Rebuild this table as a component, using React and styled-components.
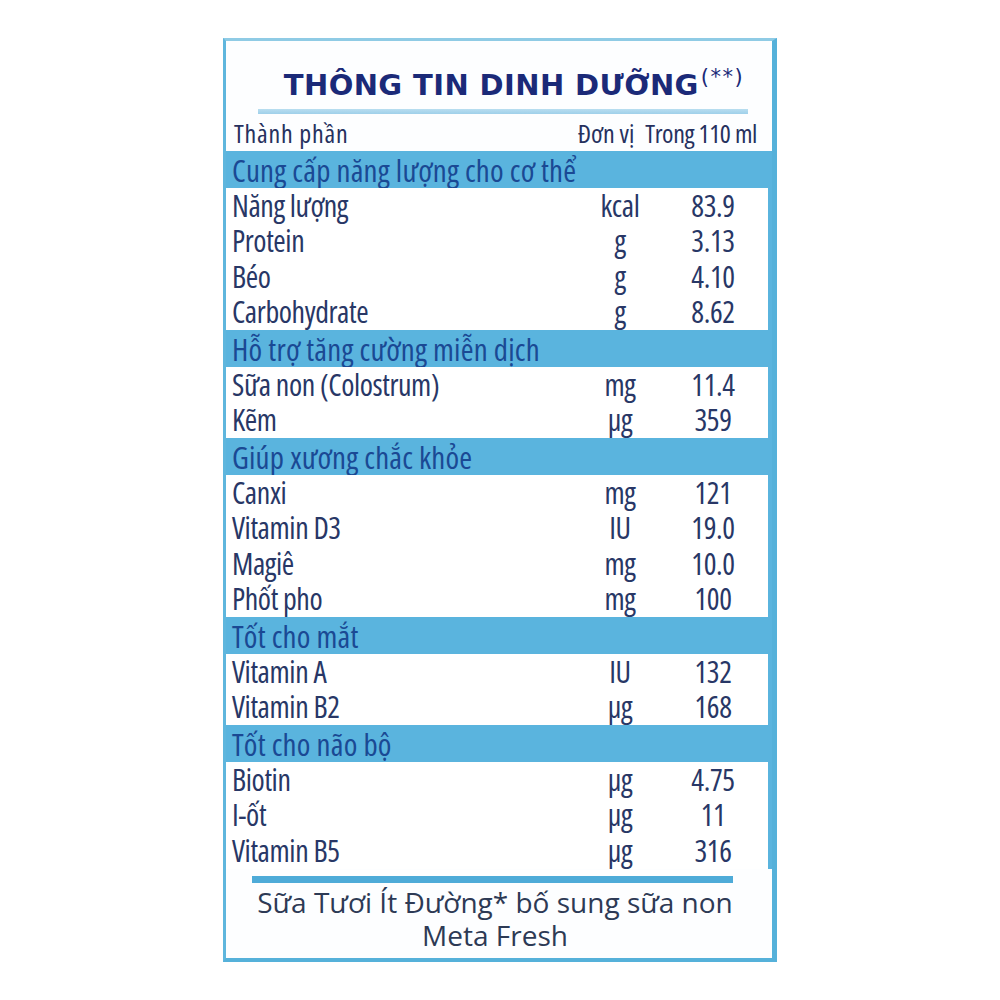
import React from "react";
import styled, { createGlobalStyle } from "styled-components";

const Global = createGlobalStyle`
  html, body { margin: 0; padding: 0; background: #ffffff; }
  body { font-family: "Open Sans", "Noto Sans", sans-serif; }
`;

const Page = styled.div`
  width: 1000px;
  height: 1000px;
  padding: 38px 0 0 223px;
  box-sizing: border-box;
  background: #fff;
`;

const Card = styled.div`
  width: 554px;
  height: 924px;
  box-sizing: border-box;
  border-style: solid;
  border-color: #8fcbe5 #55b1da #55b1da #5fb6dd;
  border-width: 3px 5px 4px 3px;
  background: #fdfeff;
  display: flex;
  flex-direction: column;
`;

const TitleWrap = styled.div`
  height: 59px;
  display: flex;
  align-items: flex-end;
  justify-content: center;
  padding-left: 30px;
`;

const Title = styled.h1`
  margin: 0;
  font-family: "DejaVu Sans", "Open Sans", sans-serif;
  font-weight: 700;
  font-size: 29px;
  line-height: 30px;
  letter-spacing: 0.4px;
  color: #1b2a78;
  white-space: nowrap;
`;

const Sup = styled.sup`
  font-family: "DejaVu Sans", sans-serif;
  font-weight: 400;
  font-size: 21px;
  vertical-align: 11px;
  line-height: 0;
  letter-spacing: 1.5px;
  margin-left: 2px;
`;

const TitleRule = styled.div`
  height: 5px;
  margin: 9px 24px 0 32px;
  background: linear-gradient(#b9def0, #9fd0ea);
`;

const HeadRow = styled.div`
  height: 37px;
  display: flex;
  align-items: center;
  padding: 0 15px 0 8px;
  box-sizing: border-box;
  font-size: 26px;
  line-height: 28px;
  font-stretch: 75%;
  letter-spacing: -0.4px;
  color: #26315e;
  white-space: nowrap;
`;

const HeadName = styled.span`
  flex: 1;
  letter-spacing: 0.8px;
`;

const HeadUnit = styled.span`
  margin-right: 11px;
  letter-spacing: 0;
`;

const Table = styled.div`
  background: #5ab4de;
  display: flex;
  flex-direction: column;
`;

const SectionBar = styled.div`
  height: 37px;
  display: flex;
  align-items: center;
  padding: 0 0 0 6px;
  font-size: 31px;
  line-height: 32px;
  font-stretch: 75%;
  letter-spacing: 0.2px;
  color: #1a4994;
  white-space: nowrap;
`;

const Block = styled.div`
  background: #ffffff;
  margin-right: 4px;
  display: flex;
  flex-direction: column;
`;

const Row = styled.div`
  height: 35.5px;
  display: grid;
  grid-template-columns: 1fr 70px 70px;
  column-gap: 23px;
  align-items: center;
  padding: 0 20px 0 6px;
  font-size: 30px;
  line-height: 30px;
  font-stretch: 75%;
  letter-spacing: -0.4px;
  color: #283766;
  white-space: nowrap;
`;

const Cell = styled.span`
  text-align: ${(p) => p.$align || "left"};
`;

const Footer = styled.div`
  flex: 1;
  display: flex;
  flex-direction: column;
  align-items: center;
`;

const FooterRule = styled.div`
  align-self: stretch;
  height: 7px;
  margin: 7px 39px 0 26px;
  background: #4eabd8;
`;

const FooterText = styled.p`
  margin: 3px 0 0 0;
  font-family: "Open Sans", sans-serif;
  font-size: 28px;
  line-height: 33px;
  color: #2d3a55;
  text-align: center;
  padding-right: 8px;
`;

const sections = [
  {
    title: "Cung cấp năng lượng cho cơ thể",
    rows: [
      ["Năng lượng", "kcal", "83.9"],
      ["Protein", "g", "3.13"],
      ["Béo", "g", "4.10"],
      ["Carbohydrate", "g", "8.62"],
    ],
  },
  {
    title: "Hỗ trợ tăng cường miễn dịch",
    rows: [
      ["Sữa non (Colostrum)", "mg", "11.4"],
      ["Kẽm", "µg", "359"],
    ],
  },
  {
    title: "Giúp xương chắc khỏe",
    rows: [
      ["Canxi", "mg", "121"],
      ["Vitamin D3", "IU", "19.0"],
      ["Magiê", "mg", "10.0"],
      ["Phốt pho", "mg", "100"],
    ],
  },
  {
    title: "Tốt cho mắt",
    rows: [
      ["Vitamin A", "IU", "132"],
      ["Vitamin B2", "µg", "168"],
    ],
  },
  {
    title: "Tốt cho não bộ",
    rows: [
      ["Biotin", "µg", "4.75"],
      ["I-ốt", "µg", "11"],
      ["Vitamin B5", "µg", "316"],
    ],
  },
];

export default function App() {
  return (
    <Page>
      <Global />
      <Card>
        <TitleWrap>
          <Title>
            THÔNG TIN DINH DƯỠNG<Sup>(**)</Sup>
          </Title>
        </TitleWrap>
        <TitleRule />
        <HeadRow>
          <HeadName>Thành phần</HeadName>
          <HeadUnit>Đơn vị</HeadUnit>
          <span>Trong 110 ml</span>
        </HeadRow>
        <Table>
          {sections.map((s) => (
            <React.Fragment key={s.title}>
              <SectionBar>{s.title}</SectionBar>
              <Block>
                {s.rows.map(([name, unit, val]) => (
                  <Row key={name}>
                    <Cell>{name}</Cell>
                    <Cell $align="center">{unit}</Cell>
                    <Cell $align="center">{val}</Cell>
                  </Row>
                ))}
              </Block>
            </React.Fragment>
          ))}
        </Table>
        <Footer>
          <FooterRule />
          <FooterText>
            Sữa Tươi Ít Đường* bố sung sữa non
            <br />
            Meta Fresh
          </FooterText>
        </Footer>
      </Card>
    </Page>
  );
}
